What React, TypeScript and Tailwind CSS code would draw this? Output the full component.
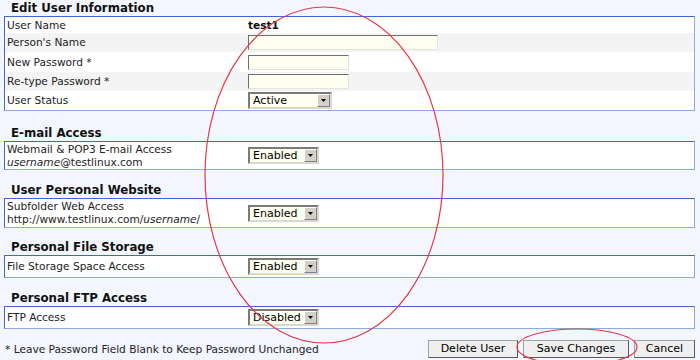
import React from 'react'

const font = { fontFamily: '"DejaVu Sans", Verdana, sans-serif' }

function Caixa({ children, className = '' }: { children: React.ReactNode; className?: string }) {
  return (
    <div
      className={
        'bg-white border border-t-[#3b69cf] border-l-[#3b69cf] border-b-[#8aa9e5] border-r-[#8aa9e5] ' + className
      }
    >
      {children}
    </div>
  )
}

function Titulo({ texto, className = '' }: { texto: string; className?: string }) {
  return <div className={'h-[16px] pl-[7px] text-[11.8px] font-bold leading-[16px] text-[#111] ' + className}>{texto}</div>
}

function Campo({ largura }: { largura: string }) {
  return (
    <div
      className={
        largura +
        ' h-[15px] bg-[#fefef1] border border-t-[#6f6f6f] border-l-[#6f6f6f] border-b-[#e4e4dc] border-r-[#e4e4dc]'
      }
    />
  )
}

function Selecao({ valor, largura }: { valor: string; largura: string }) {
  return (
    <div
      className={
        largura +
        ' h-[17px] flex items-stretch bg-[#fefef1] border-2 border-t-[#7a7a7a] border-l-[#7a7a7a] border-b-[#d8d8d0] border-r-[#d8d8d0]'
      }
    >
      <span className="flex-1 pl-[3px] text-[11px] leading-[13px] text-black">{valor}</span>
      <span className="w-[13px] flex items-center justify-center bg-[#d4d0c8] border border-t-white border-l-white border-b-[#808080] border-r-[#808080]">
        <svg width="5" height="3" viewBox="0 0 5 3">
          <path d="M0 0h5L2.5 3z" fill="#000" />
        </svg>
      </span>
    </div>
  )
}

function Linha({
  rotulo,
  cinza,
  altura,
  children,
}: {
  rotulo: React.ReactNode
  cinza?: boolean
  altura: string
  children?: React.ReactNode
}) {
  return (
    <div className={'flex items-center ' + altura + (cinza ? ' bg-[#f4f4f4]' : '')}>
      <div className="w-[243px] pl-[2px] text-[10.6px] leading-[13px] text-[#222]">{rotulo}</div>
      <div className="flex-1 flex items-center">{children}</div>
    </div>
  )
}

function Botao({ texto, largura }: { texto: string; largura: string }) {
  return (
    <button
      type="button"
      className={
        largura +
        ' h-[18px] bg-[#efefef] text-[11px] leading-[14px] text-black border border-t-[#a0a0a0] border-l-[#a0a0a0] border-b-[#5a5a5a] border-r-[#5a5a5a]'
      }
    >
      {texto}
    </button>
  )
}

export default function App() {
  return (
    <div className="relative w-[700px] h-[360px] overflow-hidden bg-[#f3f6fe]" style={font}>
      <div className="pl-[4px] pr-[5px]">
        <Titulo texto="Edit User Information" />
        <Caixa className="h-[95px] pt-0">
          <Linha rotulo="User Name" altura="h-[16px]">
            <span className="text-[10.6px] font-bold leading-[13px] text-[#111]">test1</span>
          </Linha>
          <Linha rotulo="Person's Name" cinza altura="h-[19px]">
            <Campo largura="w-[190px]" />
          </Linha>
          <Linha rotulo="New Password *" altura="h-[20px]">
            <Campo largura="w-[101px]" />
          </Linha>
          <Linha rotulo="Re-type Password *" cinza altura="h-[19px]">
            <Campo largura="w-[101px]" />
          </Linha>
          <Linha rotulo="User Status" altura="h-[19px]">
            <Selecao valor="Active" largura="w-[84px]" />
          </Linha>
        </Caixa>

        <Titulo texto="E-mail Access" className="mt-[14px]" />
        <Caixa className="h-[29px]">
          <Linha
            altura="h-[27px]"
            rotulo={
              <>
                Webmail &amp; POP3 E-mail Access
                <br />
                <i>username</i>@testlinux.com
              </>
            }
          >
            <Selecao valor="Enabled" largura="w-[71px]" />
          </Linha>
        </Caixa>

        <Titulo texto="User Personal Website" className="mt-[12px]" />
        <Caixa className="h-[30px]">
          <Linha
            altura="h-[28px]"
            rotulo={
              <>
                Subfolder Web Access
                <br />
                http://www.testlinux.com/<i>username</i>/
              </>
            }
          >
            <Selecao valor="Enabled" largura="w-[71px]" />
          </Linha>
        </Caixa>

        <Titulo texto="Personal File Storage" className="mt-[11px]" />
        <Caixa className="h-[23px]">
          <Linha rotulo="File Storage Space Access" altura="h-[21px]">
            <Selecao valor="Enabled" largura="w-[71px]" />
          </Linha>
        </Caixa>

        <Titulo texto="Personal FTP Access" className="mt-[12px]" />
        <Caixa className="h-[23px]">
          <Linha rotulo="FTP Access" altura="h-[21px]">
            <Selecao valor="Disabled" largura="w-[71px]" />
          </Linha>
        </Caixa>

        <div className="mt-[11px] flex items-center">
          <span className="pl-[1px] text-[10.6px] leading-[14px] text-[#222]">
            * Leave Password Field Blank to Keep Password Unchanged
          </span>
          <div className="ml-auto flex gap-[5px]">
            <Botao texto="Delete User" largura="w-[90px]" />
            <Botao texto="Save Changes" largura="w-[106px]" />
            <Botao texto="Cancel" largura="w-[61px]" />
          </div>
        </div>
      </div>

      <svg className="pointer-events-none absolute inset-0" width="700" height="360">
        <ellipse cx="324" cy="175" rx="119" ry="168" fill="none" stroke="#e23a44" strokeWidth="1.2" />
        <ellipse cx="577" cy="347" rx="60" ry="18" fill="none" stroke="#e23a44" strokeWidth="1.2" />
      </svg>
    </div>
  )
}
